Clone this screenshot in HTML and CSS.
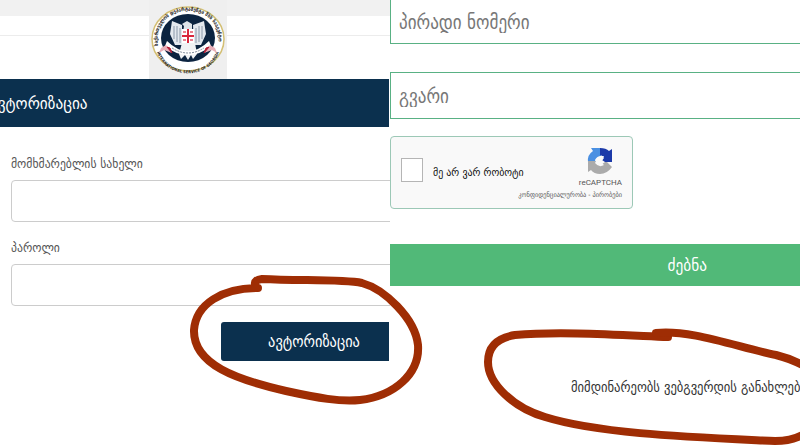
FILE: index.html
```
<!DOCTYPE html>
<html lang="ka">

<head>
    <meta charset="UTF-8">
    <meta name="viewport" content="width=device-width, initial-scale=1.0">
    <title>ავტორიზაცია</title>
    <link rel="stylesheet" href="styles.css">
</head>

<body>
    <div class="container">
        <div class="login">
            <div class="header">
                <div class="logo">
                    <svg viewBox="0 0 78 72" role="img" aria-label="Logo">
                        <defs>
                            <path id="topArc" d="M9 43 C2 -4 76 -4 69 43" />
                            <path id="bottomArc" d="M8 46 C16 77 62 77 70 46" />
                        </defs>
                        <ellipse cx="39" cy="36" rx="36" ry="32" fill="#fff" stroke="#d3bf74" stroke-width="1.5" />
                        <ellipse cx="39" cy="35" rx="27" ry="24" fill="#0c2440" />
                        <text class="seal-text"><textPath href="#topArc">საქართველოს დეპარტამენტი შსს სააგენტო</textPath></text>
                        <text class="seal-small"><textPath href="#bottomArc" startOffset="50%">INTERNATIONAL SERVICE OF GEORGIA</textPath></text>
                        <path d="M33 22 L23 18 L21 31 L26 42 L33 42 Z M44 22 L55 18 L57 31 L52 42 L45 42 Z" fill="#e3e8ee" />
                        <path d="M25 23 V36 M28 23 V39 M31 25 V40 M53 23 V36 M50 23 V39 M47 25 V40" stroke="#8a98a9" fill="none" />
                        <path d="M34 30 L35 23 L33 21 L38 18 L43 21 L43 30 Z" fill="#dfe4e9" />
                        <path d="M33 40 H46 L48 51 L44 56 L42 52 L39 57 L36 52 L32 56 L30 51 Z" fill="#f0f2f4" />
                        <rect x="33" y="26" width="12" height="14" fill="#fff" />
                        <path d="M39 26 V40 M33 33 H45" stroke="#d9263c" stroke-width="2" />
                        <path d="M34 29 H37 M41 29 H44 M34 37 H37 M41 37 H44" stroke="#e2556a" stroke-width="1.5" />
                        <path d="M18 38 Q28 48 39 48 Q50 48 60 38 L62 43 Q51 52 39 52 Q27 52 16 43 Z" fill="#fff" />
                        <path d="M23 45 Q31 50 39 50 Q47 50 55 45" stroke="#7f8b9a" stroke-dasharray="2 1" fill="none" />
                        <path d="M17 42 L23 50 L15 47 L10 50 L12 45 Z M61 42 L55 50 L63 47 L68 50 L66 45 Z" fill="#e9aeb7" />
                        <path d="M18 44 L23 50 L21 45 Z M60 44 L55 50 L57 45 Z" fill="#b51f36" stroke="#b51f36" />
                    </svg>
                </div>
            </div>
            <h1 class="title">ავტორიზაცია</h1>
            <form class="login-form">
                <label for="username">მომხმარებლის სახელი</label>
                <input type="text" id="username">
                <label for="password">პაროლი</label>
                <input type="password" id="password">
                <button type="button" class="btn1">ავტორიზაცია</button>
            </form>
        </div>

        <div class="search">
            <form class="search-form">
                <input type="text" class="first" placeholder="პირადი ნომერი" aria-label="პირადი ნომერი">
                <input type="text" placeholder="გვარი" aria-label="გვარი">
                <div class="captcha">
                    <input type="checkbox" id="robot">
                    <label for="robot">მე არ ვარ რობოტი</label>
                    <div class="captcha-info">
                        <svg class="captcha-logo" viewBox="0 0 26 28">
                            <path d="M4 1 H14 V9 Q10 9 8 13 L10 15 H1 Q0 8 6 4 Z" fill="#4a90e2" />
                            <path d="M13 1 Q19 1 22 4 L25 2 V15 H14 L17 11 Q15 8 13 8 Z" fill="#1c3aa9" />
                            <path d="M1 14 H9 L8 16 Q12 21 17 18 L14 15 H20 L25 20 Q20 27 13 27 Q7 27 4 23 L1 25 Z" fill="#ababab" />
                            <path d="M13 9 L17 9 L15 13 L18 15 L14 18 L10 17 L8 13 L12 13 Z" fill="#f9f9f9" />
                        </svg>
                        <span class="captcha-name">reCAPTCHA</span>
                        <span class="captcha-links"><a href="#">კონფიდენციალურობა</a> - <a href="#">პირობები</a></span>
                    </div>
                </div>
                <button type="button" class="btn2">ძებნა</button>
            </form>
            <p class="notice">მიმდინარეობს ვებგვერდის განახლება</p>
        </div>

        <!-- hand drawn marks over both forms -->
        <svg class="marks" viewBox="0 0 800 445">
            <path d="M258 288 C222 288 196 304 194 330 C193 365 238 380 286 391 C318 398 340 402 360 400 C394 396 420 374 418 345 C415 318 384 289 362 283 C342 279 300 281 262 279 Q254 280 255 284" />
            <path d="M668 337 C620 335 560 331 515 335 C496 338 488 348 488 362 C488 384 514 408 545 417 C600 434 690 437 775 441 Q792 441 804 434" />
            <path d="M656 333 C690 329 740 348 776 355 Q792 359 804 366" />
        </svg>
    </div>
</body>

</html>
```
FILE: styles.css
```
* {
    box-sizing: border-box;
}

body {
    font-family: "DejaVu Sans Condensed", "DejaVu Sans", sans-serif;
    background-color: #fff;
    margin: 0;
    overflow: hidden;
}

.container {
    position: relative;
    display: grid;
    grid-template-columns: 39fr 41fr;
    min-height: 100vh;
}

.login,
.search {
    min-width: 0;
    overflow: hidden;
}

.header {
    height: 79px;
    padding-left: 149px;
    background: linear-gradient(#f1f1f1 16px, #fff 16px, #fff 35px, #ececec 35px, #ececec 36px, #fff 36px);
}

.logo {
    width: 78px;
    height: 79px;
    padding-top: 3px;
    background-color: #efefef;
}

.logo svg {
    display: block;
    width: 78px;
}

.seal-text {
    font-size: 5px;
    font-weight: bold;
    fill: #222;
}

.seal-small {
    font-size: 4px;
    font-weight: bold;
    fill: #222;
    text-anchor: middle;
    dominant-baseline: middle;
}

.title {
    margin: 0 1px 0 0;
    text-indent: -10px;
    background-color: #0b304e;
    color: #fff;
    font-size: 17px;
    font-weight: normal;
    line-height: 48px;
}

.login-form {
    display: flex;
    flex-direction: column;
    padding: 27px 0 0 11px;
}

.login-form label {
    color: #555;
    font-size: 13px;
    line-height: 20px;
}

.login-form input {
    height: 42px;
    margin: 6px -8px 16px 0;
    border: 1px solid #ccc;
    border-radius: 4px;
}

.btn1 {
    align-self: flex-end;
    width: 168px;
    height: 39px;
    padding: 0 0 0 18px;
    margin-right: 1px;
    background-color: #0b304e;
    color: #fff;
    border: none;
    border-radius: 3px 0 0 3px;
    font-family: inherit;
    font-size: 16px;
}

.search-form > input {
    display: block;
    width: calc(100% + 8px);
    height: 47px;
    margin-bottom: 17px;
    padding: 0 8px;
    border: 1px solid #59b184;
    font-family: inherit;
    font-size: 19px;
}

.search-form > .first {
    height: 44px;
    margin-bottom: 28px;
    border-top: none;
}

.search-form > input::placeholder {
    color: #777;
}

.captcha {
    display: flex;
    align-items: center;
    width: 243px;
    height: 73px;
    padding: 0 10px;
    background-color: #f9f9f9;
    border: 1px solid #9cc8b6;
    border-radius: 4px;
}

.captcha input {
    appearance: none;
    flex: none;
    width: 22px;
    height: 24px;
    margin: 0 10px 6px 0;
    background-color: #fff;
    border: 1px solid #b5b5b5;
}

.captcha label {
    flex: none;
    color: #111;
    font-size: 11px;
}

.captcha-info {
    display: flex;
    flex: 1;
    flex-direction: column;
    align-items: flex-end;
    min-width: 0;
    color: #555;
}

.captcha-logo {
    width: 26px;
    height: 28px;
    margin-right: 9px;
}

.captcha-name {
    font-family: Roboto, sans-serif;
    font-size: 8px;
    line-height: 16px;
}

.captcha-links {
    font-size: 7px;
    line-height: 8px;
    white-space: nowrap;
}

.captcha-links a {
    color: inherit;
    text-decoration: none;
}

/* wider than the column, runs off the right side */
.btn2 {
    display: block;
    width: 145%;
    height: 42px;
    margin-top: 35px;
    background-color: #51b978;
    color: #fff;
    border: none;
    font-family: inherit;
    font-size: 17px;
}

.notice {
    margin: 91px 0 0 181px;
    color: #333;
    font-size: 14px;
    line-height: 20px;
    white-space: nowrap;
}

.marks {
    position: absolute;
    top: 0;
    left: 0;
    width: 100%;
    pointer-events: none;
}

.marks path {
    fill: none;
    stroke: #9f2d04;
    stroke-width: 8;
    stroke-linecap: round;
}
```
